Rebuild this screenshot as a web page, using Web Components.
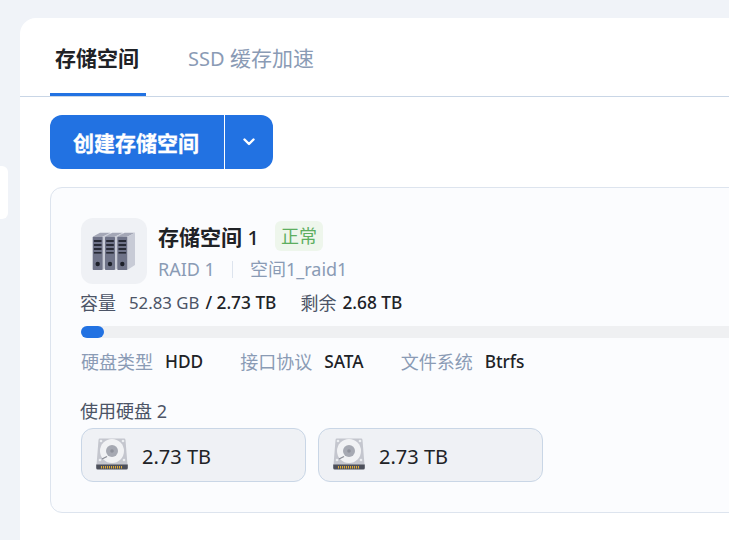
<!DOCTYPE html>
<html lang="zh">
<head>
<meta charset="utf-8">
<title>存储空间</title>
<style>
html,body{margin:0;height:540px;overflow:hidden;background:#f0f3f8}
body{font-family:"Noto Sans","Noto Sans CJK SC",sans-serif}
</style>
</head>
<body>
<storage-page></storage-page>
<script>
const serverIcon = `<svg width="44" height="40" viewBox="0 0 44 40">
  ${[0,12.3,24.6].map(x=>`<g transform="translate(${x} 0)">
    <path d="M.7 5.700L8 1.700h10.400L10.700 5.700z" fill="#a4a7b6"/>
    <path d="M10.700 5.700L18.400 1.700V34L10.700 39z" fill="#c8cbd6"/>
    <rect x=".7" y="5.700" width="10" height="33.300" rx=".8" fill="#6f7388"/>
    <rect x="1.900" y="9" width="7.600" height="2" fill="#282b36"/>
    <rect x="1.900" y="13" width="7.600" height="2" fill="#282b36"/>
    <rect x="1.900" y="17" width="7.600" height="2" fill="#282b36"/>
    <rect x="1.900" y="21" width="7.600" height="1.600" fill="#282b36"/>
    <circle cx="5.700" cy="33" r="2.200" fill="#1d2029"/>
  </g>`).join('')}
</svg>`

const diskPins = Array.from({length:11},(_,i)=>`<rect x="${5+i*2}" y="28" width="1" height="2.500" fill="#e0ac3a"/>`).join('')
const diskIcon = `<svg width="32" height="32" viewBox="0 0 32 32">
  <path d="M4 .5h24a1.500 1.500 0 0 1 1.500 1.400L31.500 27H.5L2.500 1.900A1.500 1.500 0 0 1 4 .5z" fill="#c4c6ce"/>
  <circle cx="5" cy="3" r="1.300" fill="#eceef1"/><circle cx="27" cy="3" r="1.300" fill="#eceef1"/>
  <circle cx="4" cy="22" r="1.300" fill="#eceef1"/><circle cx="28" cy="22" r="1.300" fill="#eceef1"/>
  <circle cx="16" cy="13" r="12" fill="#f1f2f4"/>
  <circle cx="16" cy="13" r="6" fill="#a6a9b2"/>
  <circle cx="16" cy="13" r="1.800" fill="#8d909a"/>
  <path d="M6 21l5-2.500" stroke="#8a8d96" stroke-width="1.300"/>
  <path d="M.2 26.500h31.600v3.500a1.500 1.500 0 0 1-1.500 1.500H1.700A1.500 1.500 0 0 1 .2 30z" fill="#4d505b"/>
  ${diskPins}
</svg>`

class TabBar extends HTMLElement{
    constructor(){
        super()
        this.attachShadow({mode:'open'}).innerHTML=`
        <style>
            :host{display:flex;height:78px;padding-left:30px;border-bottom:1px solid #c9d6e6}
            div{height:75px;line-height:80px;font-size:21px;color:#8a9bb5;white-space:nowrap}
            .on{width:94px;padding-right:2px;text-align:center;color:#202226;font-weight:700;border-bottom:3px solid #2272e2;margin-right:42px}
            span{font-size:20px}
        </style>
        <div class="on">存储空间</div>
        <div><span>SSD</span> 缓存加速</div>`
    }
}

class SplitButton extends HTMLElement{
    constructor(){
        super()
        this.attachShadow({mode:'open'}).innerHTML=`
        <style>
            :host{display:inline-flex;height:54px;color:#fff;font-size:21px;font-weight:700;-webkit-text-stroke:.3px #fff}
            div{background:#2272e2;display:flex;align-items:center;justify-content:center}
            .main{width:174px;border-radius:12px 0 0 12px;padding-right:2px;box-sizing:border-box}
            .more{width:48px;margin-left:1px;border-radius:0 12px 12px 0}
        </style>
        <div class="main"><slot></slot></div>
        <div class="more"><svg width="12" height="8" viewBox="0 0 12 8"><path d="M1.500 1.500L6 6l4.500-4.500" fill="none" stroke="#fff" stroke-width="2.400" stroke-linecap="round" stroke-linejoin="round"/></svg></div>`
    }
}

class SpecItem extends HTMLElement{
    constructor(){
        super()
        this.attachShadow({mode:'open'}).innerHTML=`
        <style>
            :host{display:flex;gap:12px;font-size:18px;line-height:24px;white-space:nowrap}
            span{color:#8a9bb5}
            b{color:#202226;font-weight:500;font-size:17.300px}
        </style>
        <span>${this.getAttribute('label')}</span><b><slot></slot></b>`
    }
}

class DiskChip extends HTMLElement{
    constructor(){
        super()
        this.attachShadow({mode:'open'}).innerHTML=`
        <style>
            :host{display:flex;align-items:center;box-sizing:border-box;width:225px;height:54px;padding-left:14px;gap:14px;
                background:#eff1f5;border:1px solid #c9d6e6;border-radius:12px;font-size:20px;color:#202226}
            svg{display:block;margin-top:-2px}
            span{padding-top:2px}
        </style>
        ${diskIcon}<span><slot></slot></span>`
    }
}

class VolumePanel extends HTMLElement{
    constructor(){
        super()
        this.attachShadow({mode:'open'}).innerHTML=`
        <style>
            :host{display:block;box-sizing:border-box;width:760px;height:326px;margin-top:18px;padding:30px;
                background:#fbfcfe;border:1px solid #dde4ee;border-radius:12px}
            .head{display:flex;gap:11px}
            .logo{width:66px;height:66px;border-radius:12px;background:#eff1f5;display:flex;align-items:center;justify-content:center}
            .title{display:flex;align-items:flex-start;gap:16px;height:38px;font-size:21px;line-height:38px;font-weight:700;color:#202226}
            .title small{font-size:20px;font-weight:500}
            .badge{font-size:18px;font-weight:400;color:#5dae5f;background:#eef6ec;border-radius:6px;padding:0 6px;line-height:30px;margin-top:3px}
            .sub{display:flex;align-items:center;font-size:18px;line-height:24px;color:#8a9bb5;margin-top:1px}
            .sub i{width:1px;height:17px;background:#dde4ee;margin:0 17px}
            .use{display:flex;font-size:18px;line-height:24px;color:#4c5466;margin-top:7px;margin-left:-1px;white-space:nowrap}
            .use em{font-style:normal;font-size:16.800px;margin-left:13px}
            .use b{font-weight:500;color:#202226;font-size:17.300px;margin-left:6px}
            .use span{margin-left:24px}
            .bar{height:12px;border-radius:6px;background:#eff0f2;margin-top:11px;width:680px}
            .bar div{width:23px;height:12px;border-radius:6px;background:#2272e2}
            .specs{display:flex;gap:37px;margin-top:12px}
            .used{font-size:18px;line-height:24px;color:#4c5466;margin-top:25px;margin-left:-1px}
            .disks{display:flex;gap:12px;margin-top:5px}
        </style>
        <div class="head">
            <div class="logo">${serverIcon}</div>
            <div>
                <div class="title"><span>存储空间 <small>1</small></span><span class="badge">正常</span></div>
                <div class="sub">RAID 1<i></i>空间1_raid1</div>
            </div>
        </div>
        <div class="use">容量<em>52.83 GB</em><b>/ 2.73 TB</b><span>剩余</span><b>2.68 TB</b></div>
        <div class="bar"><div></div></div>
        <div class="specs">
            <spec-item label="硬盘类型">HDD</spec-item>
            <spec-item label="接口协议">SATA</spec-item>
            <spec-item label="文件系统">Btrfs</spec-item>
        </div>
        <div class="used">使用硬盘 2</div>
        <div class="disks"><disk-chip>2.73 TB</disk-chip><disk-chip>2.73 TB</disk-chip></div>`
    }
}

class StoragePage extends HTMLElement{
    constructor(){
        super()
        this.attachShadow({mode:'open'}).innerHTML=`
        <style>
            :host{display:flex;width:729px;height:540px;overflow:hidden}
            .side{flex:none;width:8px;height:53px;margin:166px 12px 0 0;background:#fff;border-radius:0 6px 6px 0}
            .card{flex:none;width:800px;height:600px;margin-top:18px;background:#fff;border-radius:16px 0 0 0}
            .body{padding:18px 30px 0}
        </style>
        <div class="side"></div>
        <div class="card">
            <tab-bar></tab-bar>
            <div class="body">
                <split-button>创建存储空间</split-button>
                <volume-panel></volume-panel>
            </div>
        </div>`
    }
}

customElements.define('tab-bar',TabBar)
customElements.define('split-button',SplitButton)
customElements.define('spec-item',SpecItem)
customElements.define('disk-chip',DiskChip)
customElements.define('volume-panel',VolumePanel)
customElements.define('storage-page',StoragePage)
</script>
</body>
</html>
